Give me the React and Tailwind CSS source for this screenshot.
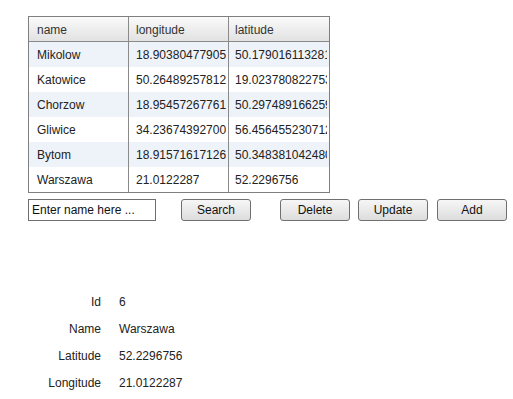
import React from "react";

const rows = [
  ["Mikolow", "18.903804779052734", "50.179016113281250"],
  ["Katowice", "50.264892578125000", "19.023780822753906"],
  ["Chorzow", "18.954572677612305", "50.297489166259766"],
  ["Gliwice", "34.236743927001953", "56.456455230712891"],
  ["Bytom", "18.915716171264648", "50.348381042480469"],
  ["Warszawa", "21.0122287", "52.2296756"],
];

function Btn({ children, className }) {
  return (
    <button
      className={
        "h-[22px] w-[70px] rounded-[3px] border border-[#707070] bg-gradient-to-b from-[#f6f6f6] to-[#dddddd] text-[12px] text-[#111] leading-none " +
        className
      }
    >
      {children}
    </button>
  );
}

export default function App() {
  return (
    <div className="min-h-[399px] w-[513px] bg-white pl-[28px] pt-[16px] font-['Liberation_Sans',Arial,sans-serif] text-[12px] text-[#222]">
      <div className="w-[302px] border border-[#7f7f7f]">
        <div className="grid h-[25px] grid-cols-[100px_100px_100px] border-b border-[#8a8a8a] bg-gradient-to-b from-[#fafafa] to-[#e2e2e2] text-[#333]">
          <div className="flex items-center border-r border-[#8a8a8a] pl-[8px] pt-[1px]">name</div>
          <div className="flex items-center border-r border-[#8a8a8a] pl-[7px] pt-[1px]">longitude</div>
          <div className="flex items-center pl-[6px] pt-[1px]">latitude</div>
        </div>
        {rows.map((r, i) => (
          <div
            key={r[0]}
            className={
              "grid h-[25px] grid-cols-[100px_100px_100px] " +
              (i % 2 === 0 ? "bg-[#eef3fa]" : "bg-white")
            }
          >
            <div className="flex items-center overflow-hidden whitespace-nowrap border-r border-[#8a8a8a] pl-[8px]">{r[0]}</div>
            <div className="flex items-center overflow-hidden whitespace-nowrap border-r border-[#8a8a8a] pl-[7px] pr-[2px]">
              <span className="overflow-hidden">{r[1]}</span>
            </div>
            <div className="flex items-center overflow-hidden whitespace-nowrap pl-[6px] pr-[2px]">
              <span className="overflow-hidden">{r[2]}</span>
            </div>
          </div>
        ))}
      </div>
      <div className="mt-[6px] flex items-center">
        <input
          className="h-[22px] w-[128px] border border-[#6f6f6f] px-[3px] text-[12px] text-[#111] placeholder-[#111] outline-none"
          placeholder="Enter name here ..."
        />
        <Btn className="ml-[25px]">Search</Btn>
        <Btn className="ml-[29px]">Delete</Btn>
        <Btn className="ml-[8px]">Update</Btn>
        <Btn className="ml-[9px]">Add</Btn>
      </div>
      <div className="mt-[67px] grid grid-cols-[73px_auto] gap-x-[18px]">
        {[
          ["Id", "6"],
          ["Name", "Warszawa"],
          ["Latitude", "52.2296756"],
          ["Longitude", "21.0122287"],
        ].map(([k, v]) => (
          <React.Fragment key={k}>
            <div className="flex h-[27px] items-center justify-end">{k}</div>
            <div className="flex h-[27px] items-center">{v}</div>
          </React.Fragment>
        ))}
      </div>
    </div>
  );
}
